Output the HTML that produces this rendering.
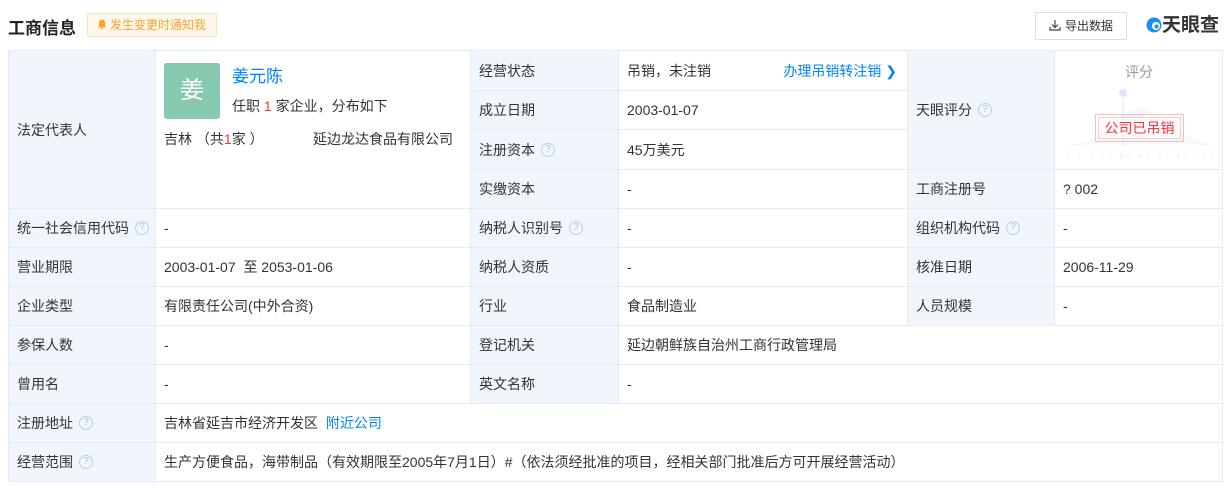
<!DOCTYPE html>
<html><head><meta charset="utf-8"><style>
*{margin:0;padding:0;box-sizing:border-box}
body{width:1232px;height:488px;background:#fff;font-family:"Liberation Sans","Noto Sans CJK SC",sans-serif;font-size:14px;color:#333;position:relative;overflow:hidden}
.a{position:absolute}
table{position:absolute;left:8px;top:50px;border-collapse:collapse;table-layout:fixed}
td{border:1px solid #e3ecf4;padding:0 0 0 8px;vertical-align:middle;white-space:nowrap;overflow:hidden;line-height:18px}
td.l{background:#f0f6fc;color:#333}
.q{display:inline-block;width:14px;height:14px;border:1px solid #b8d0e8;border-radius:50%;color:#a9c6e4;font-size:10px;line-height:12px;text-align:center;margin-left:6px;vertical-align:middle;position:relative;top:-1px}
.blue{color:#0084ff}
</style></head><body>
<div class="a" style="left:8px;top:14px;font-size:17px;font-weight:bold;color:#222">工商信息</div>
<div class="a" style="left:87px;top:13px;width:130px;height:24px;background:#fff7e9;border:1px solid #fde2b6;border-radius:2px;color:#f8a431;font-size:12px;line-height:22px;padding-left:9px">
<svg width="10" height="11" viewBox="0 0 10 11" style="vertical-align:-1px;margin-right:3px"><path d="M5 0.5C2.8 0.5 2 2.3 2 4v3L1 8.5h8L8 7V4C8 2.3 7.2 0.5 5 0.5z M3.8 9.3h2.4a1.2 1.2 0 0 1-2.4 0z" fill="#f8a431"/></svg>发生变更时通知我</div>
<div class="a" style="left:1035px;top:12px;width:92px;height:28px;border:1px solid #ddd;border-radius:2px;font-size:12px;line-height:26px;padding-left:13px;color:#333">
<svg width="12" height="12" viewBox="0 0 12 12" style="vertical-align:-1px;margin-right:4px"><path d="M6 1v7M3 5.5L6 8.5 9 5.5M1 8v3h10V8" stroke="#444" stroke-width="1.2" fill="none"/></svg>导出数据</div>
<div class="a" style="left:1146px;top:14px;height:24px;font-size:19px;font-weight:bold;color:#333;line-height:24px">
<svg width="16" height="16" viewBox="0 0 16 16" style="vertical-align:-2px"><circle cx="8" cy="8" r="7.5" fill="#1a8cff"/><circle cx="10" cy="9" r="4" fill="#fff"/><circle cx="10.5" cy="9.5" r="2" fill="#1a8cff"/></svg>天眼查</div>

<table>
<colgroup><col style="width:147px"><col style="width:315px"><col style="width:148px"><col style="width:289px"><col style="width:147px"><col style="width:168px"></colgroup>
<tr style="height:40px">
<td class="l" rowspan="4">法定代表人</td>
<td rowspan="4" style="vertical-align:top;padding:0;position:relative">
 <div class="a" style="left:8px;top:12px;width:56px;height:56px;background:#87c9ae;border-radius:3px;color:#fff;font-size:24px;line-height:56px;text-align:center">姜</div>
 <div class="a blue" style="left:76px;top:17px;font-size:17px">姜元陈</div>
 <div class="a" style="left:76px;top:46px">任职 <span style="color:#f33">1</span> 家企业，分布如下</div>
 <div class="a" style="left:8px;top:79px">吉林 （共<span style="color:#f33">1</span>家 ）</div>
 <div class="a" style="left:157px;top:79px">延边龙达食品有限公司</div>
</td>
<td class="l">经营状态</td>
<td>吊销，未注销<span class="blue" style="float:right;margin-right:10px">办理吊销转注销 ❯</span></td>
<td class="l" rowspan="3">天眼评分<span class="q">?</span></td>
<td rowspan="3" style="padding:0;position:relative">
 <div class="a" style="left:0;top:12px;width:168px;text-align:center;color:#999;font-size:14px">评分</div>
 <svg class="a" style="left:10px;top:34px" width="150" height="76" viewBox="0 0 150 76"><path d="M5 60 C40 60 50 30 70 25 C90 20 100 50 145 60" stroke="#eef4fb" fill="#f6f9fd"/><line x1="58" y1="8" x2="58" y2="62" stroke="#dde9f6"/><circle cx="58" cy="8" r="4" fill="#dbe8f8"/><text x="0" y="73" font-size="7" fill="#eeeeee" textLength="148">0  1  3  15  50  85  97  99  100</text></svg>
 <div class="a" style="left:40px;top:63px;width:89px;height:28px;border:1px solid #fbb;padding:2px"><div style="border:1px solid #fcc;height:22px;line-height:20px;text-align:center;color:#f33;font-size:14px">公司已吊销</div></div>
</td>
</tr>
<tr style="height:39px"><td class="l">成立日期</td><td>2003-01-07</td></tr>
<tr style="height:40px"><td class="l">注册资本<span class="q">?</span></td><td>45万美元</td></tr>
<tr style="height:39px"><td class="l">实缴资本</td><td>-</td><td class="l">工商注册号</td><td>? 002</td></tr>
<tr style="height:39px"><td class="l">统一社会信用代码<span class="q">?</span></td><td>-</td><td class="l">纳税人识别号<span class="q">?</span></td><td>-</td><td class="l">组织机构代码<span class="q">?</span></td><td>-</td></tr>
<tr style="height:39px"><td class="l">营业期限</td><td>2003-01-07&nbsp; 至 2053-01-06</td><td class="l">纳税人资质</td><td>-</td><td class="l">核准日期</td><td>2006-11-29</td></tr>
<tr style="height:39px"><td class="l">企业类型</td><td>有限责任公司(中外合资)</td><td class="l">行业</td><td>食品制造业</td><td class="l">人员规模</td><td>-</td></tr>
<tr style="height:39px"><td class="l">参保人数</td><td>-</td><td class="l">登记机关</td><td colspan="3">延边朝鲜族自治州工商行政管理局</td></tr>
<tr style="height:39px"><td class="l">曾用名</td><td>-</td><td class="l">英文名称</td><td colspan="3">-</td></tr>
<tr style="height:39px"><td class="l">注册地址<span class="q">?</span></td><td colspan="5">吉林省延吉市经济开发区 <span class="blue" style="margin-left:4px">附近公司</span></td></tr>
<tr style="height:39px"><td class="l">经营范围<span class="q">?</span></td><td colspan="5">生产方便食品，海带制品（有效期限至2005年7月1日）#（依法须经批准的项目，经相关部门批准后方可开展经营活动）</td></tr>
</table>
</body></html>
